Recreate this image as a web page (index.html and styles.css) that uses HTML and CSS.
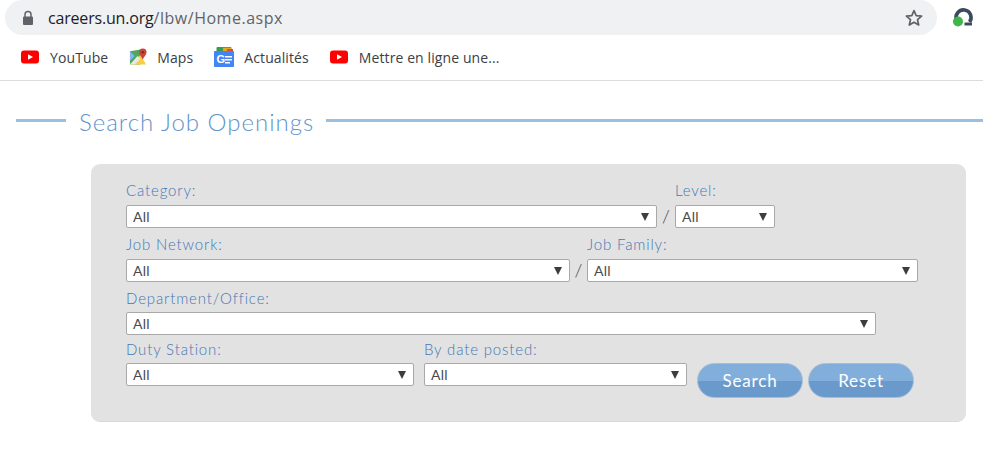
FILE: index.html
```html
<!DOCTYPE html>
<html lang="en">
<head>
<meta charset="utf-8">
<title>Search Job Openings</title>
<link rel="stylesheet" href="styles.css">
</head>
<body>
<header class="chrome">
  <div class="toolbar">
    <div class="omnibox">
      <svg class="lock" viewBox="0 0 12 16" width="12" height="16"><path d="M3 7V4.600a3 3 0 0 1 6 0V7" fill="none" stroke="#5f6368" stroke-width="1.500"/><rect x="1" y="6.500" width="10" height="8.500" rx="1" fill="#5f6368"/></svg>
      <span class="url"><span class="host">careers.un.org</span><span class="path">/lbw/Home.aspx</span></span>
      <svg class="star" viewBox="0 0 20 20" width="20" height="20"><path d="M10 2.600l2.200 5 5.400.5-4.100 3.600 1.200 5.300L10 14.200 5.300 17l1.200-5.300L2.400 8.100l5.400-.5z" fill="none" stroke="#5f6368" stroke-width="1.700" stroke-linejoin="round"/></svg>
    </div>
    <svg class="ext" viewBox="0 0 24 24" width="24" height="24"><path d="M5.500 15A7.500 7.500 0 1 1 18.500 17" fill="none" stroke="#3c4a5e" stroke-width="3.600"/><path d="M13.500 19h7.500" stroke="#3c4a5e" stroke-width="3"/><circle cx="7" cy="16.500" r="5" fill="#3fb54a"/></svg>
  </div>
  <nav class="bookmarks">
    <a class="bookmark"><svg class="icon-yt" viewBox="0 0 18 14" width="18" height="14"><rect width="18" height="13" y=".5" rx="3" fill="#f00"/><path d="M7 4.200v5.600L12 7z" fill="#fff"/></svg>YouTube</a>
    <a class="bookmark"><svg class="icon-maps" viewBox="0 0 20 20" width="19" height="20"><path d="M1 4l11-2v16L1 18z" fill="#4fa85b"/><path d="M1 18L12 8l6 10z" fill="#f7cf3f"/><path d="M1 4l5 5-5 5z" fill="#8ab4f8"/><path d="M1 18L9 9l3 3-6 6z" fill="#e8e8e8"/><path d="M14.500 1a4 4 0 0 1 4 4c0 2.500-2.700 4.500-4 7.500-1.300-3-4-5-4-7.500a4 4 0 0 1 4-4z" fill="#c9453b"/><circle cx="14.500" cy="5" r="1.300" fill="#7d2a25"/></svg>Maps</a>
    <a class="bookmark"><svg class="icon-news" viewBox="0 0 20 20" width="20" height="20"><rect x="2.500" y="0" width="15" height="6" rx="1" fill="#3c9a52"/><rect x="9" y="0.800" width="8" height="5" fill="#e5a823"/><rect x="13" y="2" width="6" height="4" fill="#d9503f"/><rect y="4" width="20" height="16" rx="1" fill="#4285f4"/><text class="news-g" x="2.500" y="15.500">G</text><path d="M11 9h7v1.600h-7zM11 12h7v1.600h-7zM11 15h5v1.400h-5z" fill="#fff"/></svg>Actualités</a>
    <a class="bookmark"><svg class="icon-yt" viewBox="0 0 18 14" width="18" height="14"><rect width="18" height="13" y=".5" rx="3" fill="#f00"/><path d="M7 4.200v5.600L12 7z" fill="#fff"/></svg>Mettre en ligne une...</a>
  </nav>
</header>

<main class="page">
  <h1 class="heading"><span class="rule rule-short"></span><span class="heading-text">Search Job Openings</span><span class="rule rule-long"></span></h1>

  <form class="panel">
    <div class="row row-1">
      <div class="field">
        <label class="label">Category:</label>
        <div class="select w-category"><span>All</span></div>
      </div>
      <span class="slash">/</span>
      <div class="field">
        <label class="label">Level:</label>
        <div class="select w-level"><span>All</span></div>
      </div>
    </div>
    <div class="row row-2">
      <div class="field">
        <label class="label">Job Network:</label>
        <div class="select w-network"><span>All</span></div>
      </div>
      <span class="slash">/</span>
      <div class="field">
        <label class="label">Job Family:</label>
        <div class="select w-family"><span>All</span></div>
      </div>
    </div>
    <div class="row row-3">
      <div class="field">
        <label class="label">Department/Office:</label>
        <div class="select w-dept"><span>All</span></div>
      </div>
    </div>
    <div class="row row-4">
      <div class="field">
        <label class="label">Duty Station:</label>
        <div class="select w-duty"><span>All</span></div>
      </div>
      <div class="field">
        <label class="label">By date posted:</label>
        <div class="select w-date"><span>All</span></div>
      </div>
      <div class="actions">
        <button class="btn" type="button">Search</button>
        <button class="btn" type="button">Reset</button>
      </div>
    </div>
  </form>
</main>
</body>
</html>
```
FILE: styles.css
```css
* { box-sizing: border-box; }
html, body { margin: 0; padding: 0; background: #fff; }
body { width: 983px; height: 474px; overflow: hidden; font-family: "Lato", "Liberation Sans", sans-serif; }

.chrome { height: 81px; border-bottom: 1px solid #dadce0; }
.toolbar { height: 36px; display: flex; align-items: flex-start; padding-left: 5px; }
.omnibox { width: 932px; height: 35px; background: #f0f1f3; border-radius: 18px; display: flex; align-items: center; padding: 0 13px 0 17px; }
.lock { flex: none; }
.url { margin-left: 14px; flex: 1; font: 16px "Open Sans", "Noto Sans", sans-serif; color: #5f6368; }
.host { color: #202124; letter-spacing: -.18px; }
.path { letter-spacing: .52px; }
.star { flex: none; }
.ext { margin: 5px 0 0 14px; flex: none; }

.bookmarks { height: 44px; display: flex; align-items: center; padding: 0 0 2px 21px; }
.bookmark { display: flex; align-items: center; gap: 10px; margin-right: 21px; font: 14px "Open Sans", "Noto Sans", sans-serif; letter-spacing: .1px; color: #3c4043; }
.icon-yt { margin-right: 1px; }
.icon-maps { margin-right: -1px; }
.news-g { font: bold 11px "Liberation Sans", sans-serif; fill: #fff; }

.page { padding-top: 22px; }
.heading { margin: 0; height: 34px; display: flex; align-items: center; font-weight: 300; }
.rule { height: 3px; background: #9bbfe0; }
.rule-short { width: 50px; margin-left: 16px; }
.rule-long { flex: 1; }
.heading-text { margin: 2px 12px 0 13px; font-size: 24px; letter-spacing: 1px; color: #5f93cc; white-space: nowrap; }

.panel { margin: 27px 0 0 91px; width: 875px; height: 258px; background: #e2e2e2; border-radius: 9px; padding: 17px 0 0 35px; border-bottom: 1px solid #d9d9d9; }
.row { display: flex; align-items: flex-end; height: 47px; margin-bottom: 7px; }
.row-2 { margin-bottom: 6px; }
.row-3 { margin-bottom: 4px; }
.row-4 { height: 54px; align-items: flex-start; }
.row-4 .field + .field { margin-left: 10px; }
.field { display: flex; flex-direction: column; }
.label { height: 24px; font-size: 15px; font-weight: 300; line-height: 20px; letter-spacing: .85px; color: #4577b5; white-space: nowrap; }
.row-1 .label, .row-2 .label { height: 25px; }
.select { position: relative; height: 23px; background: #fff; border: 1px solid #a9a9a9; border-radius: 2px; padding-left: 6px; font-size: 14px; line-height: 22px; letter-spacing: .3px; color: #4a4a4a; }
.select::after { content: ""; position: absolute; right: 7px; top: 7px; border: 4.500px solid transparent; border-top: 8px solid #3d3d3d; border-bottom: 0; }
.slash { width: 18px; text-align: center; font-size: 18px; line-height: 23px; color: #444; font-weight: 300; }
.row-2 .slash { width: 17px; }

.w-category { width: 531px; }
.w-level { width: 100px; }
.w-network { width: 444px; }
.w-family { width: 331px; }
.w-dept { width: 750px; }
.w-duty { width: 288px; }
.w-date { width: 263px; }

.actions { display: flex; gap: 5px; margin: 24px 0 0 10px; }
.btn { width: 106px; height: 35px; padding: 0; border: 1px solid #a6bdd6; border-radius: 18px; font: 400 17px "Lato", sans-serif; letter-spacing: .85px; color: #fff; background: linear-gradient(#82aedb 0 50%, #6a9acb 50% 100%); }
```
